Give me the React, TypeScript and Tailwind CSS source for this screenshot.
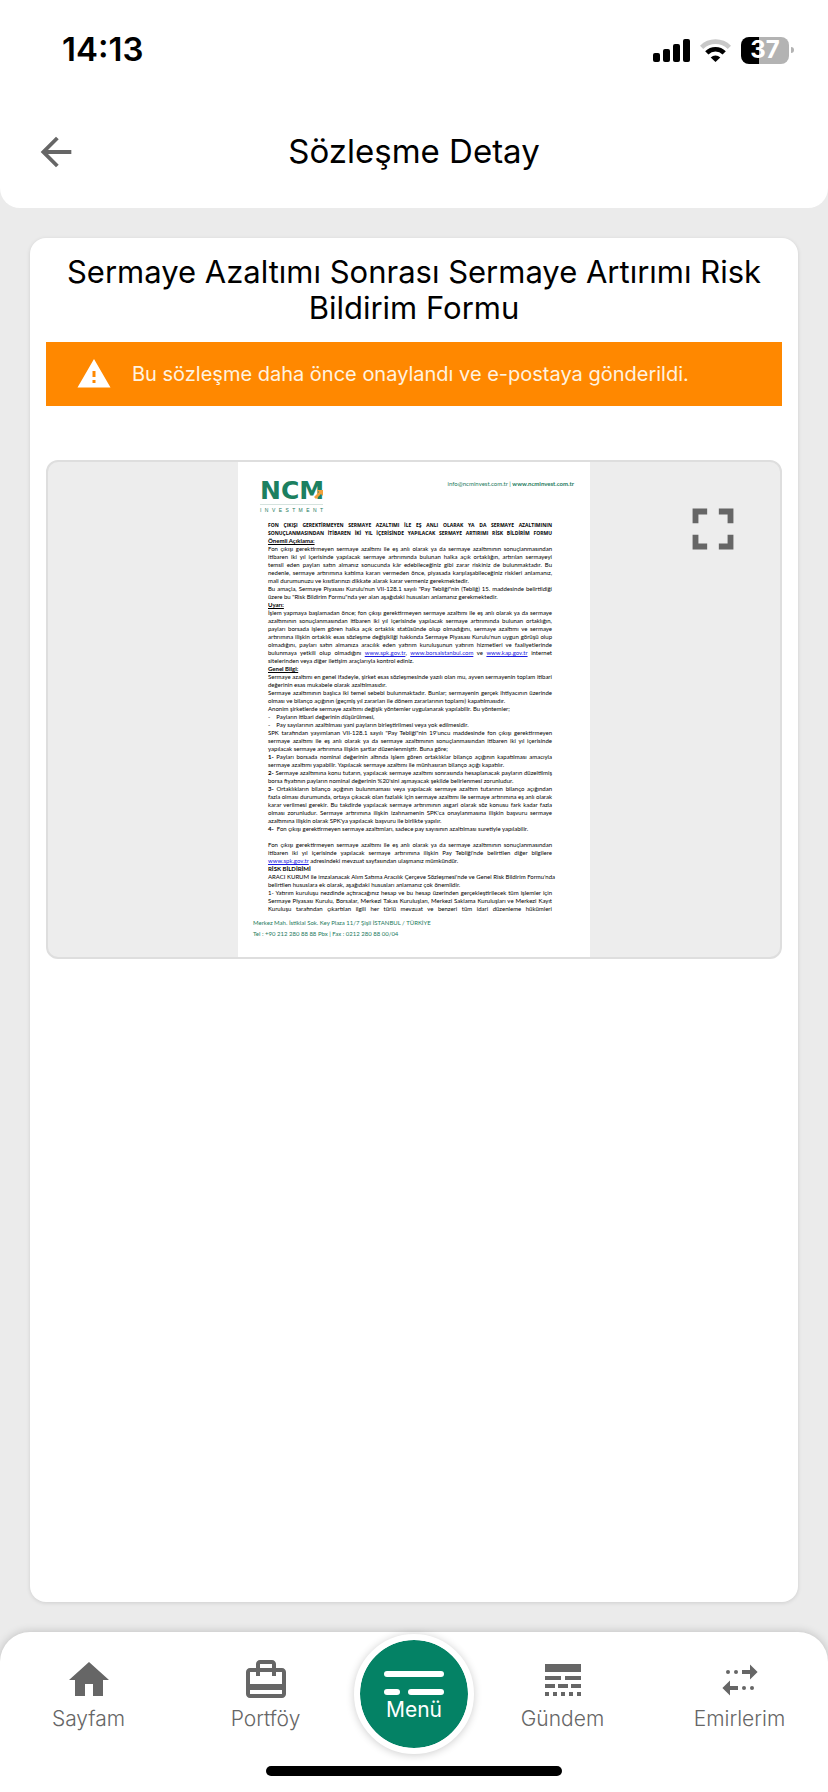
import React from "react";

type Line = { text: React.ReactNode; kind?: "head" | "justify" | "end" | "section" | "bullet" };

const Link = ({ children }: { children: string }) => (
  <a href={"https://" + children} className="text-[#1a1ae0] underline">
    {children}
  </a>
);

const lines: Line[] = [
  { kind: "head", text: "FON ÇIKIŞI GEREKTİRMEYEN SERMAYE AZALTIMI İLE EŞ ANLI OLARAK YA DA SERMAYE AZALTIMININ" },
  { kind: "head", text: "SONUÇLANMASINDAN İTİBAREN İKİ YIL İÇERİSİNDE YAPILACAK SERMAYE ARTIRIMI RİSK BİLDİRİM FORMU" },
  { kind: "section", text: "Önemli Açıklama:" },
  { text: "Fon çıkışı gerektirmeyen sermaye azaltımı ile eş anlı olarak ya da sermaye azaltımının sonuçlanmasından" },
  { text: "itibaren iki yıl içerisinde yapılacak sermaye artırımında bulunan halka açık ortaklığın, artırılan sermayeyi" },
  { text: "temsil eden payları satın almanız sonucunda kâr edebileceğiniz gibi zarar riskiniz de bulunmaktadır. Bu" },
  { text: "nedenle, sermaye artırımına katılma kararı vermeden önce, piyasada karşılaşabileceğiniz riskleri anlamanız," },
  { kind: "end", text: "mali durumunuzu ve kısıtlarınızı dikkate alarak karar vermeniz gerekmektedir." },
  { text: "Bu amaçla, Sermaye Piyasası Kurulu'nun VII-128.1 sayılı \"Pay Tebliği\"nin (Tebliğ) 15. maddesinde belirtildiği" },
  { kind: "end", text: "üzere bu \"Risk Bildirim Formu\"nda yer alan aşağıdaki hususları anlamanız gerekmektedir." },
  { kind: "section", text: "Uyarı:" },
  { text: "İşlem yapmaya başlamadan önce; fon çıkışı gerektirmeyen sermaye azaltımı ile eş anlı olarak ya da sermaye" },
  { text: "azaltımının sonuçlanmasından itibaren iki yıl içerisinde yapılacak sermaye artırımında bulunan ortaklığın," },
  { text: "payları borsada işlem gören halka açık ortaklık statüsünde olup olmadığını, sermaye azaltımı ve sermaye" },
  { text: "artırımına ilişkin ortaklık esas sözleşme değişikliği hakkında Sermaye Piyasası Kurulu'nun uygun görüşü olup" },
  { text: "olmadığını, payları satın almanıza aracılık eden yatırım kuruluşunun yatırım hizmetleri ve faaliyetlerinde" },
  {
    text: (
      <>
        bulunmaya yetkili olup olmadığını <Link>www.spk.gov.tr</Link>, <Link>www.borsaistanbul.com</Link> ve{" "}
        <Link>www.kap.gov.tr</Link> internet
      </>
    ),
  },
  { kind: "end", text: "sitelerinden veya diğer iletişim araçlarıyla kontrol ediniz." },
  { kind: "section", text: "Genel Bilgi:" },
  { text: "Sermaye azaltımı en genel ifadeyle, şirket esas sözleşmesinde yazılı olan mu, ayven sermayenin toplam itibari" },
  { kind: "end", text: "değerinin esas mukabele olarak azaltılmasıdır." },
  { text: "Sermaye azaltımının başlıca iki temel sebebi bulunmaktadır. Bunlar; sermayenin gerçek ihtiyacının üzerinde" },
  { kind: "end", text: "olması ve bilanço açığının (geçmiş yıl zararları ile dönem zararlarının toplamı) kapatılmasıdır." },
  { kind: "end", text: "Anonim şirketlerde sermaye azaltımı değişik yöntemler uygulanarak yapılabilir. Bu yöntemler;" },
  { kind: "bullet", text: "Payların itibari değerinin düşürülmesi," },
  { kind: "bullet", text: "Pay sayılarının azaltılması yani payların birleştirilmesi veya yok edilmesidir." },
  { text: "SPK tarafından yayımlanan VII-128.1 sayılı \"Pay Tebliği\"nin 19'uncu maddesinde fon çıkışı gerektirmeyen" },
  { text: "sermaye azaltımı ile eş anlı olarak ya da sermaye azaltımının sonuçlanmasından itibaren iki yıl içerisinde" },
  { kind: "end", text: "yapılacak sermaye artırımına ilişkin şartlar düzenlenmiştir. Buna göre;" },
  { text: <><b>1-</b> Payları borsada nominal değerinin altında işlem gören ortaklıklar bilanço açığının kapatılması amacıyla</> },
  { kind: "end", text: "sermaye azaltımı yapabilir. Yapılacak sermaye azaltımı ile münhasıran bilanço açığı kapatılır." },
  { text: <><b>2-</b> Sermaye azaltımına konu tutarın, yapılacak sermaye azaltımı sonrasında hesaplanacak payların düzeltilmiş</> },
  { kind: "end", text: "borsa fiyatının payların nominal değerinin %20'sini aşmayacak şekilde belirlenmesi zorunludur." },
  { text: <><b>3-</b> Ortaklıkların bilanço açığının bulunmaması veya yapılacak sermaye azaltım tutarının bilanço açığından</> },
  { text: "fazla olması durumunda, ortaya çıkacak olan fazlalık için sermaye azaltımı ile sermaye artırımına eş anlı olarak" },
  { text: "karar verilmesi gerekir. Bu takdirde yapılacak sermaye artırımının asgari olarak söz konusu fark kadar fazla" },
  { text: "olması zorunludur. Sermaye artırımına ilişkin izahnamenin SPK'ca onaylanmasına ilişkin başvuru sermaye" },
  { kind: "end", text: "azaltımına ilişkin olarak SPK'ya yapılacak başvuru ile birlikte yapılır." },
  { kind: "end", text: <><b>4-</b>&nbsp; Fon çıkışı gerektirmeyen sermaye azaltımları, sadece pay sayısının azaltılması suretiyle yapılabilir.</> },
  { kind: "end", text: "\u00a0" },
  { text: "Fon çıkışı gerektirmeyen sermaye azaltımı ile eş anlı olarak ya da sermaye azaltımının sonuçlanmasından" },
  { text: "itibaren iki yıl içerisinde yapılacak sermaye artırımına ilişkin Pay Tebliği'nde belirtilen diğer bilgilere" },
  { kind: "end", text: <><Link>www.spk.gov.tr</Link> adresindeki mevzuat sayfasından ulaşmanız mümkündür.</> },
  { kind: "end", text: <b>RİSK BİLDİRİMİ</b> },
  { text: "ARACI KURUM ile imzalanacak Alım Satıma Aracılık Çerçeve Sözleşmesi'nde ve Genel Risk Bildirim Formu'nda" },
  { kind: "end", text: "belirtilen hususlara ek olarak, aşağıdaki hususları anlamanız çok önemlidir." },
  { text: "1- Yatırım kuruluşu nezdinde açtıracağınız hesap ve bu hesap üzerinden gerçekleştirilecek tüm işlemler için" },
  { text: "Sermaye Piyasası Kurulu, Borsalar, Merkezi Takas Kuruluşları, Merkezi Saklama Kuruluşları ve Merkezi Kayıt" },
  { text: "Kuruluşu tarafından çıkartılan ilgili her türlü mevzuat ve benzeri tüm idari düzenleme hükümleri" },
];

const lineClass = {
  head: "font-['Open_Sans',sans-serif] text-[5px] leading-[8px] font-bold [text-align-last:justify]",
  justify: "[text-align-last:justify]",
  end: "",
  section: "font-bold underline",
  bullet: "flex gap-1.5 before:content-['-']",
};

function StatusBar() {
  return (
    <div className="flex h-24 items-center justify-between pt-1 pr-[34px] pl-[62px]">
      <time className="text-[33px] font-semibold">14:13</time>
      <div className="flex items-center gap-2.5">
        <svg width="37" height="23" viewBox="0 0 37 23" role="img" aria-label="Signal">
          <rect x="0" y="14" width="7" height="9" rx="2" />
          <rect x="10" y="10" width="7" height="13" rx="2" />
          <rect x="20" y="5" width="7" height="18" rx="2" />
          <rect x="30" y="0" width="7" height="23" rx="2" />
        </svg>
        <svg width="31" height="23" viewBox="0 0 31 23" fill="none" strokeWidth="4.6" role="img" aria-label="Wi-Fi">
          <path d="M1.6 8.4a19.7 19.7 0 0 1 27.8 0" stroke="#c8c8c8" />
          <path d="M6.8 13.8a12.3 12.3 0 0 1 17.4 0" stroke="#000" />
          <path d="M15.5 23l-4.8-4.6a7 7 0 0 1 9.6 0z" fill="#000" />
        </svg>
        <div className="flex items-center gap-0.5">
          <div className="flex h-[27px] w-12 items-center justify-center rounded-lg bg-[linear-gradient(to_right,#000_37%,#b3b3b3_37%)] text-[24px] font-bold text-white">
            37
          </div>
          <div className="h-1.5 w-[3px] rounded-r-full bg-[#b3b3b3]" />
        </div>
      </div>
    </div>
  );
}

function DocumentPage() {
  return (
    <article className="flex h-[495px] w-[352px] flex-col bg-white font-['Lato','Noto_Sans',sans-serif] text-[6px] leading-[8px] whitespace-nowrap text-black">
      <div className="flex h-[59px] items-start justify-between pt-[18px] pr-4 pl-[22px] text-[#1c7a5c]">
        <div className="w-[63px]">
          <div className="relative font-['DejaVu_Sans',sans-serif] text-[25px] leading-[22px] font-bold text-[#1c8060]">
            NCM
            <svg className="absolute right-0 bottom-0.5" width="9" height="15" viewBox="0 0 9 15" aria-hidden="true">
              <path d="M0 12L5 7 3 5h6v6L7 9l-5 5z" fill="#f0a03c" />
            </svg>
          </div>
          <div className="mt-0.5 border-t border-[#d5e3de] pt-0.5 font-['Liberation_Sans',sans-serif] text-[5px] leading-[6px] [text-align-last:justify]">
            I N V E S T M E N T
          </div>
        </div>
        <p>
          info@ncminvest.com.tr | <b>www.ncminvest.com.tr</b>
        </p>
      </div>
      <div className="mr-[38px] ml-[30px]">
        {lines.map((line, i) => (
          <p key={i} className={lineClass[line.kind ?? "justify"]}>
            {line.text}
          </p>
        ))}
      </div>
      <footer className="mt-1 ml-[15px] leading-[11px] text-[#1c7a5c]">
        <p>Merkez Mah. İstiklal Sok. Key Plaza 11/7 Şişli İSTANBUL / TÜRKİYE</p>
        <p>Tel : +90 212 280 88 88 Pbx | Fax : 0212 280 88 00/04</p>
      </footer>
    </article>
  );
}

const navIcons = {
  home: <path d="M10 20v-6h4v6h5v-8h3L12 3 2 12h3v8z" />,
  portfolio: (
    <path d="M20 6h-3V4c0-1.11-.89-2-2-2H9c-1.11 0-2 .89-2 2v2H4c-1.11 0-2 .89-2 2v11c0 1.11.89 2 2 2h16c1.11 0 2-.89 2-2V8c0-1.11-.89-2-2-2zM9 4h6v2H9V4zm11 15H4v-2h16v2zm0-5H4V8h3v2h2V8h6v2h2V8h3v6z" />
  ),
  agenda: (
    <path d="M3 16h5v-2H3v2zm6.5 0h5v-2h-5v2zm6.5 0h5v-2h-5v2zM3 20h2v-2H3v2zm4 0h2v-2H7v2zm4 0h2v-2h-2v2zm4 0h2v-2h-2v2zm4 0h2v-2h-2v2zM3 12h8v-2H3v2zm10 0h8v-2h-8v2zM3 4v4h18V4H3z" />
  ),
  orders: (
    <>
      <path d="M17 4.2L20.8 8 17 11.8V9h-4V7h4zM7 12.2L3.2 16 7 19.8V17h4v-2H7z" />
      <circle cx="6" cy="8" r="1" />
      <circle cx="10" cy="8" r="1" />
      <circle cx="14" cy="16" r="1" />
      <circle cx="18" cy="16" r="1" />
    </>
  ),
};

function NavItem({ icon, label }: { icon: keyof typeof navIcons; label: string }) {
  return (
    <a href={"#" + icon} className="flex flex-1 flex-col items-center pt-[22px] text-[21px] leading-[30px] font-light text-[#666]">
      <svg className="size-12 fill-[#666]" viewBox="0 0 24 24" aria-hidden="true">
        {navIcons[icon]}
      </svg>
      {label}
    </a>
  );
}

export default function App() {
  return (
    <div className="flex min-h-screen flex-col bg-[#ebebeb] font-['Inter',sans-serif] text-black">
      <header className="rounded-b-[20px] bg-white">
        <StatusBar />
        <div className="grid h-28 grid-cols-[46px_1fr_46px] items-center px-[33px]">
          <button type="button" aria-label="Geri">
            <svg className="size-[46px] fill-[#666]" viewBox="0 0 24 24">
              <path d="M20 11H7.83l5.59-5.59L12 4l-8 8 8 8 1.41-1.41L7.83 13H20v-2z" />
            </svg>
          </button>
          <h1 className="text-center text-[33px]">Sözleşme Detay</h1>
        </div>
      </header>

      <main className="mx-[30px] my-[30px] flex-1 rounded-2xl bg-white px-4 pt-4 shadow-[0_1px_4px_rgba(0,0,0,0.12)]">
        <h2 className="text-center text-[31px] leading-9">
          Sermaye Azaltımı Sonrası Sermaye Artırımı Risk Bildirim Formu
        </h2>
        <div role="status" className="mt-4 flex h-16 items-center gap-5 bg-[#ff8800] px-[30px] text-[20px] text-[#fff3e0]">
          <svg className="size-9 shrink-0 fill-white" viewBox="0 0 24 24" aria-hidden="true">
            <path d="M1 21h22L12 2 1 21zm12-3h-2v-2h2v2zm0-4h-2v-4h2v4z" />
          </svg>
          Bu sözleşme daha önce onaylandı ve e-postaya gönderildi.
        </div>
        <section className="relative mt-[54px] flex justify-center overflow-hidden rounded-xl border-2 border-[#dedede] bg-[#ededed]">
          <DocumentPage />
          <button type="button" aria-label="Tam ekran" className="absolute top-8 right-8">
            <svg className="size-[70px] fill-[#666]" viewBox="0 0 24 24">
              <path d="M7 14H5v5h5v-2H7v-3zm-2-4h2V7h3V5H5v5zm12 7h-3v2h5v-5h-2v3zM14 5v2h3v3h2V5h-5z" />
            </svg>
          </button>
        </section>
      </main>

      <footer className="rounded-t-[30px] bg-white shadow-[0_0_10px_rgba(0,0,0,0.2)]">
        <nav className="flex items-start pt-0.5">
          <NavItem icon="home" label="Sayfam" />
          <NavItem icon="portfolio" label="Portföy" />
          <button
            type="button"
            className="flex size-[120px] flex-col items-center rounded-full border-[6px] border-white bg-[#048265] bg-clip-padding pt-[31px] text-[21px] leading-[26px] text-white shadow-[0_1px_8px_rgba(0,0,0,0.2)]"
          >
            <svg width="60" height="24" viewBox="0 0 60 24" fill="#fff" aria-hidden="true">
              <rect width="60" height="6" rx="3" />
              <rect y="18" width="16" height="6" rx="3" />
              <rect x="24" y="18" width="36" height="6" rx="3" />
            </svg>
            <span className="pt-0.5">Menü</span>
          </button>
          <NavItem icon="agenda" label="Gündem" />
          <NavItem icon="orders" label="Emirlerim" />
        </nav>
        <div className="mx-auto mt-3 mb-4 h-2.5 w-[296px] rounded-full bg-black" />
      </footer>
    </div>
  );
}
